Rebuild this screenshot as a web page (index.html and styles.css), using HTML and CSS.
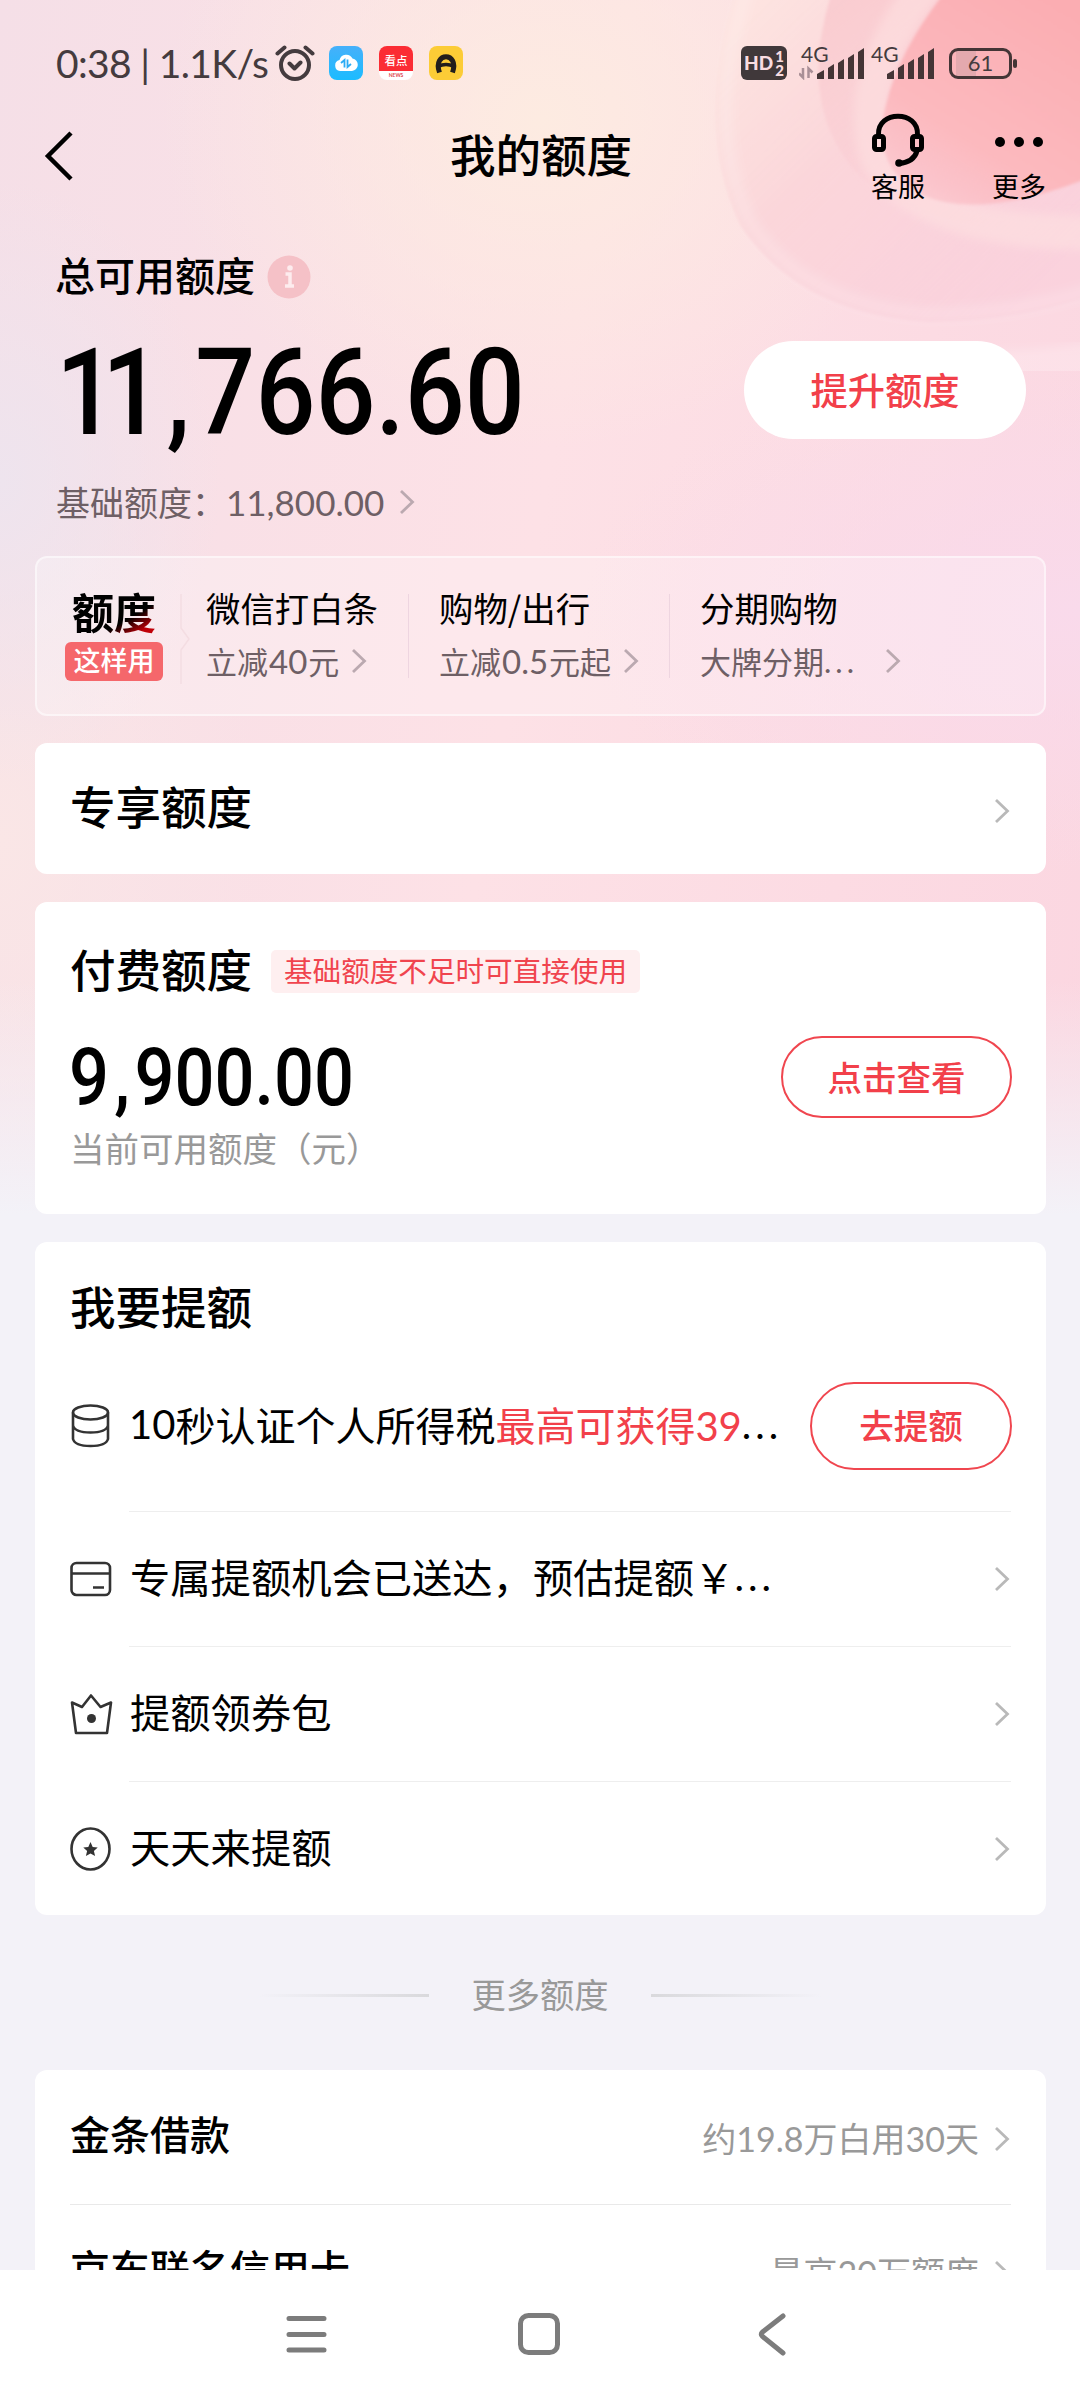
FILE: index.html
```html
<!DOCTYPE html>
<html lang="zh-CN">
<head>
<meta charset="utf-8">
<title>我的额度</title>
<link rel="stylesheet" href="styles.css">
</head>
<body>
<svg width="0" height="0" class="defs">
  <symbol id="chev" viewBox="0 0 16 26"><path d="M2 2L13.500 13L2 24" fill="none" stroke="currentColor" stroke-width="2.800"/></symbol>
</svg>
<div class="screen">
  <svg class="backdrop" viewBox="0 0 1080 1250" preserveAspectRatio="none">
    <defs>
      <linearGradient id="disc" gradientUnits="userSpaceOnUse" x1="1080" y1="20" x2="960" y2="215"><stop offset="0" stop-color="#fbadb2"/><stop offset=".7" stop-color="#fcb9be"/><stop offset="1" stop-color="#fbc0c8" stop-opacity=".7"/></linearGradient>
      <linearGradient id="ring1" gradientUnits="userSpaceOnUse" x1="730" y1="40" x2="1000" y2="320"><stop offset="0" stop-color="#fde2de" stop-opacity=".7"/><stop offset=".4" stop-color="#fbd3d8" stop-opacity=".8"/><stop offset="1" stop-color="#f9cbd8" stop-opacity=".55"/></linearGradient>
      <linearGradient id="ring2" gradientUnits="userSpaceOnUse" x1="820" y1="20" x2="1000" y2="260"><stop offset="0" stop-color="#f9c8cd" stop-opacity=".8"/><stop offset="1" stop-color="#fbd0d8" stop-opacity="0"/></linearGradient>
      <filter id="soft"><feGaussianBlur stdDeviation="5"/></filter>
      <filter id="edge"><feGaussianBlur stdDeviation="1.500"/></filter>
    </defs>
    <path d="M740 -20Q690 120 740 225Q800 315 930 322Q1030 322 1120 285V-20Z" fill="url(#ring1)" filter="url(#edge)"/>
    <path d="M750 -20Q702 120 750 222Q806 306 930 314Q1030 314 1120 280" fill="none" stroke="#fff" stroke-opacity=".16" stroke-width="14" filter="url(#soft)"/>
    <path d="M820 345Q950 385 1120 355" fill="none" stroke="#fff" stroke-opacity=".22" stroke-width="34" filter="url(#soft)"/>
    <path d="M836 -20Q795 95 850 165Q905 235 1120 240V-20Z" fill="url(#ring2)" filter="url(#edge)"/>
    <path d="M930 -20Q850 80 878 160Q930 240 1120 232" fill="none" stroke="#fde1e1" stroke-opacity=".6" stroke-width="34" filter="url(#soft)"/>
    <path d="M955 -20H1120V165Q985 225 920 194Q870 165 886 105Q900 45 955 -20Z" fill="url(#disc)" filter="url(#edge)"/>
  </svg>
  <header class="status">
    <span class="clock">0:38 | 1.1K/s</span>
    <svg class="alarm" viewBox="0 0 40 36"><g fill="none" stroke="#443b3e" stroke-width="4" stroke-linecap="round" stroke-linejoin="round"><circle cx="20" cy="20" r="14"/><path d="M14.500 18.500l5 5 6-6M2.500 8.500l7-6M37.500 8.500l-7-6"/></g></svg>
    <svg class="app" viewBox="0 0 34 34"><defs><linearGradient id="cl" x2="0" y2="1"><stop stop-color="#46b0fa"/><stop offset="1" stop-color="#1bbcff"/></linearGradient></defs><rect width="34" height="34" rx="8" fill="url(#cl)"/><path d="M11 25a5.600 5.600 0 0 1-.5-11 7 7 0 0 1 13-1.500A6.300 6.300 0 0 1 23 25Z" fill="#fff"/><path d="M12 17l3.500-3V21.500M18.500 13.500v7.500L22 18" fill="none" stroke="#2cacf5" stroke-width="1.800"/></svg>
    <span class="app news"><b>看点</b><i>NEWS</i></span>
    <svg class="app" viewBox="0 0 34 34"><rect width="34" height="34" rx="8" fill="#fccc36"/><path d="M10.500 26.500C3 5.500 31 5.500 23.500 26.500" fill="none" stroke="#221e1c" stroke-width="5"/><path d="M9 20.500Q17 16.500 25 20.500" fill="none" stroke="#221e1c" stroke-width="3.500"/></svg>
    <div class="right">
      <span class="hd">HD<span><b>1</b><b>2</b></span></span>
      <span class="net"><em>4G</em><svg viewBox="0 0 66 34"><path d="M4 22v9.500l-4-4M9.500 32V22.500l4 4" stroke="#a98f96" stroke-width="2.500" fill="none"/><g fill="#443536"><path d="M18 28l7-4v9h-7zM29 22l6-4v15h-6zM39 17l6-4v20h-6zM49 12l6-4v25h-6zM59 6l6-4v31h-6z"/></g></svg></span>
      <span class="net"><em>4G</em><svg viewBox="0 0 66 34"><g fill="#443536"><path d="M18 28l7-4v9h-7zM29 22l6-4v15h-6zM39 17l6-4v20h-6zM49 12l6-4v25h-6zM59 6l6-4v31h-6z"/></g></svg></span>
      <span class="batt"><span>61</span></span>
    </div>
  </header>
  <nav class="top">
    <svg class="back" viewBox="0 0 30 50"><path d="M27 2L4 25L27 48" fill="none" stroke="#000" stroke-width="4.500"/></svg>
    <h1>我的额度</h1>
    <div class="acts">
      <div><svg viewBox="0 0 54 54"><g fill="none" stroke="#000" stroke-width="5"><path d="M7.500 22C6 -3 48 -3 46.500 22"/><rect x="3.500" y="23.500" width="9" height="13" rx="2"/><rect x="41.500" y="23.500" width="9" height="13" rx="2"/><path d="M46 38Q43 49 28 50.500"/></g><circle cx="28" cy="50" r="3.800"/></svg><span>客服</span></div>
      <div><svg viewBox="0 0 54 54"><circle cx="8" cy="29" r="5"/><circle cx="27" cy="29" r="5"/><circle cx="46" cy="29" r="5"/></svg><span>更多</span></div>
    </div>
  </nav>
  <section class="total">
    <div class="label"><span>总可用额度</span><svg viewBox="0 0 44 44"><circle cx="22" cy="22" r="21.500" fill="#f5c1c7"/><circle cx="23" cy="13" r="2.800" fill="#fdecee"/><path d="M18.500 19H23V30M18 31H27" fill="none" stroke="#fdecee" stroke-width="3.500"/></svg></div>
    <div class="sumrow"><div class="sum"><span class="one">1</span>1<span class="comma">,</span>766.60</div><button class="raise">提升额度</button></div>
    <div class="base">基础额度：<span class="num">11,800.00</span><svg class="chev"><use href="#chev"/></svg></div>
  </section>
  <section class="strip">
    <div class="logo"><strong>额度</strong><span>这样用</span></div>
    <svg class="notch" viewBox="0 0 12 90"><path d="M2 0V34L10 45L2 56V90" fill="none" stroke="#f4dde2" stroke-width="1.500"/></svg>
    <div class="use u1"><b>微信打白条</b><p>立减<span class="num">40</span>元<svg class="chev"><use href="#chev"/></svg></p></div>
    <div class="use u2"><b>购物/出行</b><p>立减<span class="num">0.5</span>元起<svg class="chev"><use href="#chev"/></svg></p></div>
    <div class="use u3"><b>分期购物</b><p>大牌分期<span class="dots">...</span><svg class="chev"><use href="#chev"/></svg></p></div>
  </section>
  <section class="card own"><h2>专享额度</h2><svg class="chev"><use href="#chev"/></svg></section>
  <section class="card paid">
    <div class="head"><h2>付费额度</h2><span class="tag">基础额度不足时可直接使用</span></div>
    <div class="mid"><div class="amt">9<span class="comma">,</span>900.00</div><button class="ghost look">点击查看</button></div>
    <p class="cap">当前可用额度（元）</p>
  </section>
  <section class="card want">
    <h2>我要提额</h2>
    <div class="row first"><svg class="ic" viewBox="0 0 44 44"><g fill="none" stroke="#333" stroke-width="2.600"><ellipse cx="20.500" cy="8.500" rx="17.500" ry="7"/><path d="M3 8.500V35Q5 42 20.500 42T38 35V8.500M3 21.500Q5 28.500 20.500 28.500T38 21.500"/></g></svg><div class="txt"><span class="num">10</span>秒认证个人所得税<em>最高可获得<span class="num">39</span></em><span class="dots">...</span></div><button class="ghost go">去提额</button></div>
    <div class="row"><svg class="ic" viewBox="0 0 44 44"><g fill="none" stroke="#333" stroke-width="2.600"><rect x="1.500" y="6" width="38.500" height="32" rx="5"/><path d="M2 16.500H40M23 30.500H34"/></g></svg><div class="txt">专属提额机会已送达，预估提额￥<span class="dots">...</span></div><svg class="chev"><use href="#chev"/></svg></div>
    <div class="row"><svg class="ic" viewBox="0 0 44 44"><path d="M6 41L2 10.500L12 15L21 3.500L30.500 15L41 10.500L37 41Z" fill="none" stroke="#333" stroke-width="2.600" stroke-linejoin="round"/><circle cx="21.500" cy="26.500" r="4.500" fill="#333"/></svg><div class="txt">提额领券包</div><svg class="chev"><use href="#chev"/></svg></div>
    <div class="row"><svg class="ic" viewBox="0 0 44 44"><ellipse cx="20.500" cy="22" rx="19" ry="20.500" fill="none" stroke="#333" stroke-width="2.600"/><path d="M20.500 15l2.200 5 5 .5-3.800 3.500 1.200 5-4.600-2.500-4.600 2.500 1.200-5-3.800-3.500 5-.5z" fill="#333"/></svg><div class="txt">天天来提额</div><svg class="chev"><use href="#chev"/></svg></div>
  </section>
  <div class="more"><i></i><span>更多额度</span><i></i></div>
  <section class="card list">
    <div class="line"><b>金条借款</b><span>约<span class="num">19.8</span>万白用<span class="num">30</span>天</span><svg class="chev"><use href="#chev"/></svg></div>
    <div class="line"><b>京东联名信用卡</b><span>最高<span class="num">20</span>万额度</span><svg class="chev"><use href="#chev"/></svg></div>
  </section>
  <footer class="sysnav">
    <svg viewBox="0 0 44 44"><path d="M5 6.500H40M5 22.500H40M5 38H40" stroke="#7c7c7c" stroke-width="5" stroke-linecap="round"/></svg>
    <svg viewBox="0 0 44 44"><rect x="3.500" y="3.500" width="37" height="37" rx="8" fill="none" stroke="#7c7c7c" stroke-width="5"/></svg>
    <svg viewBox="0 0 44 44"><path d="M33 4L12.500 20Q10 22 12.500 24.500L33 41" fill="none" stroke="#7c7c7c" stroke-width="5" stroke-linecap="round"/></svg>
  </footer>
</div>
</body>
</html>
```
FILE: styles.css
```css
* { box-sizing: border-box; margin: 0; padding: 0; }
body { width: 1080px; height: 2400px; overflow: hidden; font-family: "Noto Sans CJK SC", sans-serif; color: #000; }
button { font: inherit; background: none; border: 0; }
em, i { font-style: normal; }
svg { display: block; flex: none; }
.defs { position: absolute; }
.num { font-family: Lato, "Noto Sans CJK SC", sans-serif; }
.screen {
  position: relative; height: 2400px; overflow: hidden; display: flex; flex-direction: column;
  background:
    linear-gradient(180deg, rgba(243,242,248,0) 980px, #f3f2f8 1215px),
    radial-gradient(ellipse 380px 330px at 540px 120px, #fdebe1, rgba(253,235,225,0)),
    radial-gradient(ellipse 220px 300px at 0 480px, #eee4ee, rgba(238,228,238,0)),
    radial-gradient(ellipse 500px 260px at 1080px 610px, #f9daeb, rgba(249,218,235,0)),
    radial-gradient(ellipse 260px 400px at 0 840px, #fae6e6, rgba(250,230,230,0)),
    linear-gradient(100deg, #f5dfe7 0, #fde1e6 42%, #fbd5e0 90%);
}
.backdrop { position: absolute; left: 0; top: 0; width: 1080px; height: 1250px; }
.status, .top, .total, .strip, .card, .more, .sysnav { position: relative; flex: none; }

.status { height: 92px; padding: 34px 62px 0 56px; display: flex; align-items: center; color: #443b3e; }
.clock { font: 39px/50px Lato, sans-serif; width: 219px; white-space: nowrap; letter-spacing: -.65px; }
.alarm { width: 40px; height: 36px; margin-right: 14px; }
.app { width: 34px; height: 34px; margin-right: 16px; flex: none; }
.news { border-radius: 8px; background: linear-gradient(#fb2c34 73%, #fff 73%); color: #fff; text-align: center; overflow: hidden; }
.news b { display: block; font-size: 11.500px; line-height: 29px; height: 26px; font-weight: 500; }
.news i { display: block; font: bold 5px/7px Lato, sans-serif; color: #e0454a; }
.right { margin-left: auto; display: flex; align-items: center; }
.hd { display: flex; align-items: center; width: 46px; height: 34px; border-radius: 6px; background: #40383a; color: #f9dce0; font: 900 19px/34px Lato, sans-serif; padding-left: 3px; margin-right: 12px; }
.hd b { display: block; font-size: 15px; line-height: 14px; margin-left: 2px; }
.net { position: relative; width: 66px; height: 34px; margin-right: 4px; }
.net svg { width: 66px; height: 34px; }
.net em { position: absolute; left: 2px; top: 0; font: 21px/16px Lato, sans-serif; }
.batt { position: relative; width: 63px; height: 31px; border: 3px solid #443536; border-radius: 9px; margin: 0 6px 0 10px; display: flex; background: linear-gradient(90deg, #e4a9ae 20px, transparent 20px) 4px 0 no-repeat; }
.batt span { margin: auto; font: 22px/24px Lato, sans-serif; }
.batt::after { content: ""; position: absolute; right: -8px; top: 8px; width: 4px; height: 9px; border-radius: 2px; background: #443536; }

.top { height: 128px; display: flex; padding: 0 34px 0 44px; justify-content: space-between; }
.back { width: 30px; height: 50px; margin-top: 39px; margin-right: 134px; }
.top h1 { font-weight: 500; font-size: 45.500px; line-height: 60px; margin-top: 31px; margin-left: -1px; }
.acts { display: flex; gap: 67px; margin-top: 21px; margin-left: -4px; }
.acts div { width: 54px; }
.acts svg { width: 54px; height: 54px; }
.acts span { display: block; font-size: 27px; line-height: 38px; white-space: nowrap; }

.total { height: 336px; padding: 27px 54px 0 56px; }
.label { display: flex; align-items: center; gap: 12px; font-size: 40px; line-height: 60px; font-weight: 500; }
.label span { margin: -3px 0 3px -1px; }
.label svg { width: 44px; height: 44px; }
.sumrow { height: 98px; margin-top: 34px; display: flex; justify-content: space-between; }
.sum { font: 500 121px/104px Roboto, sans-serif; transform: scaleX(.873); transform-origin: 0 0; white-space: nowrap; margin-left: 0; }
.one { letter-spacing: -16px; }
.sum .comma { margin: 0 6px 0 5px; }
.raise { width: 282px; height: 98px; border-radius: 49px; background: #fff; color: #f2404a; font-size: 37.300px; font-weight: 500; padding-bottom: 2px; }
.base { margin-top: 36px; display: flex; align-items: center; font-size: 34px; line-height: 54px; color: #6e5f65; }
.base .num { font-size: 35px; }
.chev { width: 16px; height: 26px; color: #b9b9b9; }
.base .chev { margin-left: 15px; color: #bba9b0; }

.strip { width: 1011px; height: 160px; margin-left: 35px; border: 2px solid rgba(255,255,255,.5); border-radius: 12px; background: rgba(255,255,255,.25); display: flex; padding: 26px 0 0 28px; }
.logo { width: 98px; text-align: center; }
.logo strong { display: block; font-size: 42px; font-weight: 700; line-height: 54px; height: 58px; background: linear-gradient(150deg, #000 62%, #c00008 80%); -webkit-background-clip: text; background-clip: text; color: transparent; }
.logo span { display: block; height: 39px; border-radius: 6px; background: #f5676b; color: #fff; font-size: 27px; font-weight: 500; line-height: 36px; }
.notch { width: 12px; height: 90px; margin: 10px 0 0 16px; }
.use { white-space: nowrap; }
.use b { display: block; font-weight: 400; font-size: 34.400px; line-height: 52px; margin-top: -3px; }
.use p { display: flex; align-items: center; font-size: 31px; line-height: 56px; color: #6e5f65; }
.use .num { font-size: 33px; margin: 0 1px; }
.use .chev { margin-left: 12px; color: #bba9b0; }
.u1 { width: 217px; margin-left: 15px; }
.u2, .u3 { background: linear-gradient(#eed5e0, #eed5e0) 0 10px / 1px 84px no-repeat; padding-left: 31px; margin-left: -15px; }
.u2 { width: 262px; }
.u3 { margin-left: -1px; }
.dots { letter-spacing: 4px; font-family: Lato, sans-serif; }
.u3 .chev { margin-left: 27px; }

.card { width: 1011px; margin-left: 35px; background: #fff; border-radius: 12px; padding: 0 34px 0 35px; }
h2 { font-size: 45.500px; line-height: 60px; font-weight: 500; }
.own { height: 131px; margin-top: 27px; display: flex; align-items: center; justify-content: space-between; }
.own h2 { margin-top: -8px; }
.own .chev { margin-top: 4px; margin-right: 2px; }
.paid { height: 312px; margin-top: 28px; padding-top: 36px; }
.head { display: flex; align-items: center; gap: 19px; }
.tag { width: 369px; height: 43px; line-height: 39px; margin-top: 6px; border-radius: 5px; background: #feeff0; color: #f0444e; font-size: 28.600px; text-align: center; white-space: nowrap; }
.mid { display: flex; justify-content: space-between; height: 82px; margin-top: 38px; }
.amt { font: 500 80px/84px Roboto, sans-serif; transform: scaleX(.88); transform-origin: 0 0; white-space: nowrap; margin-left: -1px; }
.amt .comma { margin: 0 5px 0 6px; }
.ghost { border: 2px solid #f0464f; border-radius: 50px; color: #f2404a; font-size: 34.500px; font-weight: 500; padding-bottom: 3px; }
.look { width: 231px; height: 82px; }
.cap { font-size: 34.500px; line-height: 50px; color: #999; margin-top: 4px; }
.want { height: 673px; margin-top: 28px; padding-top: 33px; }
.row { display: flex; align-items: center; height: 135px; }
.row + .row { background: linear-gradient(#eee, #eee) 59px 0 / 882px 1px no-repeat; }
.row.first { height: 176px; padding-top: 5px; }
.ic { width: 44px; height: 44px; }
.txt { font-size: 40.300px; line-height: 60px; margin: -6px auto 0 16px; white-space: nowrap; display: flex; }
.first .txt { font-size: 40px; margin-top: -1px; margin-left: 15px; }
.txt em { color: #f2404a; }
.row .chev { margin-right: 2px; }
.go { width: 202px; height: 88px; }
.more { height: 155px; display: flex; align-items: center; justify-content: center; gap: 42px; color: #999; font-size: 34.300px; }
.more i { width: 170px; height: 3px; margin-top: 5px; background: linear-gradient(90deg, transparent, #d9d9dc); }
.more i:last-child { transform: scaleX(-1); }
.list { height: 400px; }
.line { height: 134px; display: flex; align-items: center; color: #999; font-size: 34px; }
.line + .line { background: linear-gradient(#e9e9e9, #e9e9e9) -2px 0 / 943px 1px no-repeat; }
.line b { font-size: 40px; font-weight: 500; color: #000; margin-right: auto; margin-top: -8px; }
.line .chev { margin: 4px 2px 0 15px; }
.sysnav { position: absolute; left: 0; right: 0; bottom: 0; height: 130px; background: #fff; display: flex; justify-content: center; gap: 189px; padding: 42px 2px 0 0; }
.sysnav svg { width: 44px; height: 44px; }
```
